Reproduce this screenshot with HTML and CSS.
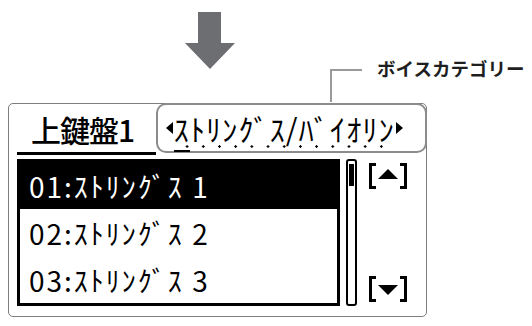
FILE: index.html
```html
<!DOCTYPE html>
<html lang="ja">
<head>
<meta charset="utf-8">
<link rel="stylesheet" href="styles.css">
</head>
<body>
<div class="page">
  <div class="top">
    <svg class="arrow" width="50" height="58" viewBox="0 0 50 58">
      <polygon points="13,0 36,0 36,31 50,31 25,57 0,31 13,31" fill="#6d6e71"/>
    </svg>
    <div class="callout">
      <span class="callout-line"></span>
      <span class="callout-text">ボイスカテゴリー</span>
    </div>
  </div>
  <div class="screen">
    <div class="head">
      <div class="tab">上鍵盤1</div>
      <div class="cat">
        <svg class="tri" width="7" height="12" viewBox="0 0 7 12"><polygon points="7,0 7,12 0,6" fill="#000"/></svg>
        <span class="cat-text"><span class="cursor">ｽ</span>ﾄﾘﾝｸﾞｽ/ﾊﾞｲｵﾘﾝ</span>
        <svg class="tri" width="7" height="12" viewBox="0 0 7 12"><polygon points="0,0 7,6 0,12" fill="#000"/></svg>
      </div>
    </div>
    <div class="body">
      <div class="list">
        <div class="row sel">01:ｽﾄﾘﾝｸﾞｽ 1</div>
        <div class="row">02:ｽﾄﾘﾝｸﾞｽ 2</div>
        <div class="row">03:ｽﾄﾘﾝｸﾞｽ 3</div>
      </div>
      <div class="scroll"><div class="thumb"></div></div>
      <div class="btns">
        <svg class="btn" width="40" height="26" viewBox="0 0 40 26">
          <path d="M1 0 H8 V3 H4 V23 H8 V26 H1 Z M39 0 H32 V3 H36 V23 H32 V26 H39 Z" fill="#000"/>
          <polygon points="10,16 20,6 30,16" fill="#000"/>
        </svg>
        <svg class="btn" width="40" height="26" viewBox="0 0 40 26">
          <path d="M1 0 H8 V3 H4 V23 H8 V26 H1 Z M39 0 H32 V3 H36 V23 H32 V26 H39 Z" fill="#000"/>
          <polygon points="10,9 30,9 20,19" fill="#000"/>
        </svg>
      </div>
    </div>
  </div>
</div>
</body>
</html>
```

FILE: styles.css
```css
html, body {
  margin: 0;
  padding: 0;
  background: #fff;
}
body {
  font-family: "Noto Sans CJK JP", "Noto Sans", sans-serif;
  color: #000;
}
.page {
  padding-left: 8px;
  width: 524px;
}
.top {
  position: relative;
  height: 103px;
}
.arrow {
  display: block;
  margin-left: 177px;
  padding-top: 12px;
}
.callout {
  position: absolute;
  left: 322px;
  top: 55px;
  display: flex;
  align-items: flex-start;
}
.callout-line {
  display: block;
  width: 32px;
  height: 33px;
  margin-top: 14px;
  border-top: 2px solid #9a9a9a;
  border-left: 2px solid #9a9a9a;
  box-sizing: border-box;
}
.callout-text {
  margin-left: 15px;
  font-size: 18.5px;
  line-height: 26px;
  font-weight: 700;
  color: #1f1f1f;
  white-space: nowrap;
}
.screen {
  box-sizing: border-box;
  width: 419px;
  height: 214px;
  border: 1px solid #7d7d7d;
  border-radius: 5px;
}
.head {
  display: flex;
  align-items: flex-start;
}
.tab {
  box-sizing: border-box;
  width: 139px;
  height: 51px;
  margin-left: 8px;
  padding-left: 14px;
  padding-top: 5px;
  border-bottom: 3px solid #000;
  font-size: 30px;
  line-height: 40px;
  font-weight: 500;
  letter-spacing: -1px;
  white-space: nowrap;
}
.cat {
  box-sizing: border-box;
  width: 272px;
  height: 50px;
  margin-top: -1px;
  margin-right: -1px;
  border: 2px solid #8c8c8c;
  border-radius: 10px;
  display: flex;
  align-items: center;
  padding-left: 8px;
  background: #fff;
}
.tri {
  display: block;
  flex: none;
}
.cat-text {
  display: block;
  margin: 0 1px 0 1px;
  font-size: 30px;
  line-height: 40px;
  letter-spacing: 1.2px;
  white-space: nowrap;
  background-image: radial-gradient(circle, #000 1.2px, transparent 1.4px);
  background-size: 16.2px 3px;
  background-repeat: repeat-x;
  background-position: 5px 37px;
}
.cursor {
  border-bottom: 2px solid #000;
}
.body {
  display: flex;
  margin-top: 4px;
  padding-left: 8px;
}
.list {
  box-sizing: border-box;
  width: 323px;
  height: 147px;
  border: 3px solid #000;
  display: flex;
  flex-direction: column;
}
.row {
  flex: 1;
  display: flex;
  align-items: center;
  padding-left: 9px;
  font-size: 28px;
  letter-spacing: 2px;
  white-space: pre;
}
.row.sel {
  background: #000;
  color: #fff;
}
.scroll {
  box-sizing: border-box;
  width: 11px;
  height: 147px;
  margin-left: 6px;
  border: 2px solid #000;
  border-radius: 3px;
}
.thumb {
  height: 22px;
  background: #000;
  border-top: 3px solid #fff;
  margin: 0 1px;
}
.btns {
  margin-left: 11px;
  padding-top: 4px;
  height: 143px;
  box-sizing: border-box;
  display: flex;
  flex-direction: column;
  justify-content: space-between;
}
.btn {
  display: block;
}
```
